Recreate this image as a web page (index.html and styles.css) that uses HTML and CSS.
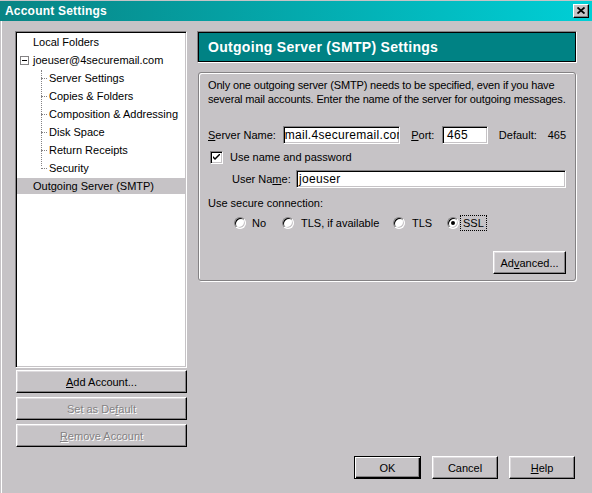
FILE: index.html
```html
<!DOCTYPE html>
<html>
<head>
<meta charset="utf-8">
<title>Account Settings</title>
<link rel="stylesheet" href="styles.css">
</head>
<body>
<div class="window">
  <div class="titlebar">
    <span class="title">Account Settings</span>
    <span class="close"><svg width="8" height="7" viewBox="0 0 8 7"><path d="M0.5 0.5 L7.5 6.5 M7.5 0.5 L0.5 6.5" stroke="#000" stroke-width="1.8" fill="none"/></svg></span>
  </div>
  <div class="client">
    <div class="main">
      <div class="left">
        <div class="tree">
          <div class="node top">Local Folders</div>
          <div class="node account"><span class="expander"><span class="minus"></span></span>joeuser@4securemail.com</div>
          <div class="children">
            <div class="node child">Server Settings</div>
            <div class="node child">Copies &amp; Folders</div>
            <div class="node child">Composition &amp; Addressing</div>
            <div class="node child">Disk Space</div>
            <div class="node child">Return Receipts</div>
            <div class="node child">Security</div>
          </div>
          <div class="node top selected">Outgoing Server (SMTP)</div>
        </div>
        <button class="btn wide first"><span><u>A</u>dd Account...</span></button>
        <button class="btn wide disabled"><span>Set as De<u>f</u>ault</span></button>
        <button class="btn wide disabled"><span><u>R</u>emove Account</span></button>
      </div>
      <div class="right">
        <div class="header"><div class="header-inner">Outgoing Server (SMTP) Settings</div></div>
        <div class="group">
          <p class="desc">Only one outgoing server (SMTP) needs to be specified, even if you have<br>several mail accounts. Enter the name of the server for outgoing messages.</p>
          <div class="row server">
            <span class="lbl lbl-server"><u>S</u>erver Name:</span>
            <span class="field field-server">mail.4securemail.com</span>
            <span class="lbl lbl-port"><u>P</u>ort:</span>
            <span class="field field-port">465</span>
            <span class="lbl lbl-default">Default:</span>
            <span class="lbl">465</span>
          </div>
          <div class="row check-row">
            <span class="checkbox"><svg width="7" height="7" viewBox="0 0 7 7"><path d="M0 2 L2 4 L7 -1 L7 1 L2 6 L0 4 Z" fill="#000"/></svg></span>
            <span>Use name and password</span>
          </div>
          <div class="row user-row">
            <span class="lbl lbl-user">User Na<u>m</u>e:</span>
            <span class="field field-user">joeuser</span>
          </div>
          <div class="secure-label">Use secure connection:</div>
          <div class="radios">
            <span class="opt opt-no"><span class="radio"></span><span>No</span></span>
            <span class="opt opt-tlsa"><span class="radio"></span><span>TLS, if available</span></span>
            <span class="opt opt-tls"><span class="radio"></span><span>TLS</span></span>
            <span class="opt opt-ssl"><span class="radio"><span class="dot"></span></span><span class="focus">SSL</span></span>
          </div>
          <div class="adv-wrap"><button class="btn adv"><span>Ad<u>v</u>anced...</span></button></div>
        </div>
      </div>
    </div>
    <div class="footer">
      <button class="btn default"><span>OK</span></button>
      <button class="btn foot"><span>Cancel</span></button>
      <button class="btn foot"><span><u>H</u>elp</span></button>
    </div>
  </div>
</div>
</body>
</html>
```

FILE: styles.css
```css
* { box-sizing: border-box; }
html, body { margin: 0; padding: 0; }
body {
  width: 592px;
  height: 493px;
  background: #c6c3c6;
  font-family: "Liberation Sans", Arial, sans-serif;
  font-size: 11px;
  color: #000;
  overflow: hidden;
}
u { text-decoration: underline; text-underline-offset: 1px; }

.window {
  width: 592px;
  height: 493px;
  display: flex;
  flex-direction: column;
  padding-top: 1px;
}
.titlebar {
  height: 20px;
  flex: none;
  background: linear-gradient(to right, #088484, #00cfd6);
  display: flex;
  align-items: center;
  justify-content: space-between;
  padding: 0 3px 0 5px;
}
.title {
  color: #fff;
  font-weight: bold;
  font-size: 12px;
  letter-spacing: 0.2px;
}
.close {
  width: 16px;
  height: 14px;
  background: #c6c3c6;
  border: 1px solid;
  border-color: #fff #000 #000 #fff;
  box-shadow: inset -1px -1px 0 #848284;
  display: flex;
  align-items: center;
  justify-content: center;
  padding-bottom: 1px;
}

.client {
  flex: 1;
  display: flex;
  flex-direction: column;
  margin-left: 1px;
  border-left: 1px solid #fff;
  padding: 10px 0 0 13px;
}
.main {
  display: flex;
  gap: 10px;
  height: 416px;
}
.left {
  width: 172px;
  display: flex;
  flex-direction: column;
}
.tree {
  height: 337px;
  background: #fff;
  border: 1px solid;
  border-color: #848284 #fff #fff #848284;
  box-shadow: inset 1px 1px 0 #000, inset -1px -1px 0 #c6c3c6;
  padding: 2px 1px 0 1px;
}
.node {
  height: 16px;
  line-height: 16px;
  margin-bottom: 2px;
  white-space: nowrap;
}
.top { padding-left: 16px; }
.account {
  display: flex;
  align-items: center;
  padding-left: 3px;
}
.expander {
  width: 9px;
  height: 9px;
  border: 1px solid #848284;
  background: #fff;
  display: flex;
  align-items: center;
  justify-content: center;
  margin-right: 4px;
}
.minus { width: 5px; height: 1px; background: #000; }
.children {
  position: relative;
  padding-left: 32px;
}
.children::before {
  content: "";
  position: absolute;
  left: 24px;
  top: 0;
  bottom: 10px;
  border-left: 1px dotted #848284;
}
.child { position: relative; }
.child::before {
  content: "";
  position: absolute;
  left: -8px;
  top: 8px;
  width: 6px;
  border-top: 1px dotted #848284;
}
.selected { background: #c6c3c6; }

.btn {
  font-family: inherit;
  font-size: 11px;
  color: #000;
  background: #c6c3c6;
  border: 1px solid;
  border-color: #fff #000 #000 #fff;
  box-shadow: inset -1px -1px 0 #848284, inset 1px 1px 0 #dedbde;
  padding: 0;
  display: flex;
  align-items: center;
  justify-content: center;
  height: 23px;
}
.wide {
  width: 171px;
  margin-left: 1px;
  margin-top: 4px;
}
.wide.first { margin-top: 2px; }
.disabled { color: #848284; text-shadow: 1px 1px 0 #fff; }

.right {
  width: 380px;
  display: flex;
  flex-direction: column;
}
.header {
  height: 32px;
  border: 1px solid;
  border-color: #848284 #fff #fff #848284;
}
.header-inner {
  height: 100%;
  border: 1px solid #000;
  background: #008284;
  color: #fff;
  font-weight: bold;
  font-size: 14px;
  letter-spacing: 0.3px;
  padding-left: 9px;
  display: flex;
  align-items: center;
}
.group {
  margin-top: 9px;
  margin-left: 1px;
  width: 378px;
  border: 1px solid #848284;
  border-radius: 3px;
  box-shadow: 1px 1px 0 #fff, inset 1px 1px 0 #fff;
  padding: 5px 9px 6px 9px;
}
.desc { margin: 0; line-height: 14px; white-space: nowrap; letter-spacing: -0.15px; }
.row {
  display: flex;
  align-items: center;
  height: 18px;
}
.lbl { white-space: nowrap; }
.server { margin-top: 20px; }
.lbl-server { width: 75px; }
.field {
  height: 18px;
  background: #fff;
  border: 1px solid;
  border-color: #848284 #fff #fff #848284;
  box-shadow: inset 1px 1px 0 #000, inset -1px -1px 0 #c6c3c6;
  padding: 0 1px 0 2px;
  line-height: 16px;
  font-size: 12px;
  letter-spacing: 0.3px;
  overflow: hidden;
  white-space: nowrap;
}
.field-server { width: 118px; padding-left: 1px; }
.lbl-port { margin-left: 11px; width: 31px; }
.field-port { width: 46px; padding-left: 4px; }
.lbl-default { margin-left: 11px; width: 49px; }
.check-row { margin-top: 4px; }
.checkbox {
  width: 13px;
  height: 13px;
  margin-left: 2px;
  margin-right: 7px;
  background: #fff;
  border: 1px solid;
  border-color: #848284 #fff #fff #848284;
  box-shadow: inset 1px 1px 0 #000, inset -1px -1px 0 #c6c3c6;
  display: flex;
  align-items: center;
  justify-content: center;
}
.user-row { margin-top: 4px; }
.lbl-user { margin-left: 24px; width: 64px; }
.field-user { width: 270px; }
.secure-label { margin-top: 8px; line-height: 14px; }
.radios {
  margin-top: 5px;
  height: 16px;
  display: flex;
  align-items: center;
  padding-left: 26px;
}
.opt {
  display: flex;
  align-items: center;
  gap: 6px;
  white-space: nowrap;
}
.opt-no { width: 48px; }
.opt-tlsa { width: 111px; gap: 7px; }
.opt-tls { width: 54px; gap: 7px; }
.opt-ssl { gap: 1px; }
.radio {
  width: 12px;
  height: 12px;
  border-radius: 50%;
  background: #fff;
  border: 1px solid;
  border-color: #848284 #fff #fff #848284;
  box-shadow: inset 1px 1px 0 #000, inset -1px -1px 0 #c6c3c6;
  display: flex;
  align-items: center;
  justify-content: center;
}
.dot { width: 4px; height: 4px; border-radius: 50%; background: #000; }
.focus {
  border: 1px dotted #000;
  padding: 0 2px;
  line-height: 14px;
}
.adv-wrap {
  margin-top: 20px;
  display: flex;
  justify-content: flex-end;
}
.adv { width: 73px; }

.footer {
  display: flex;
  justify-content: flex-end;
  gap: 11px;
  margin-top: 9px;
  padding-right: 17px;
}
.foot { width: 66px; }
.default {
  width: 67px;
  border: 1px solid #000;
  box-shadow: inset 1px 1px 0 #fff, inset -1px -1px 0 #000, inset -2px -2px 0 #848284;
}
```
